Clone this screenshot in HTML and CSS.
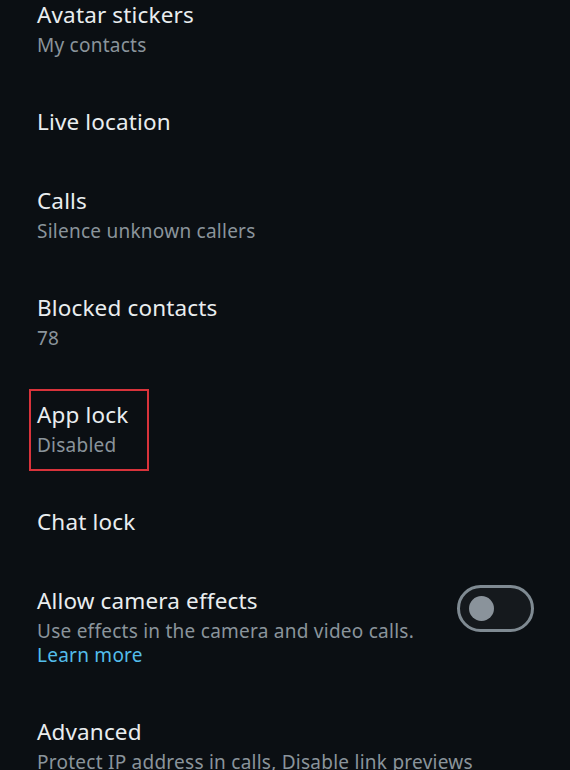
FILE: index.html
```html
<!DOCTYPE html>
<html lang="en">
<head>
    <meta charset="UTF-8">
    <title>Privacy</title>
    <link rel="stylesheet" href="styles.css">
</head>
<body>
<div id="settings">
    <div class="item">
        <div class="text">
            <div class="title">Avatar stickers</div>
            <div class="sub">My contacts</div>
        </div>
    </div>
    <div class="item">
        <div class="text">
            <div class="title">Live location</div>
        </div>
    </div>
    <div class="item">
        <div class="text">
            <div class="title">Calls</div>
            <div class="sub">Silence unknown callers</div>
        </div>
    </div>
    <div class="item">
        <div class="text">
            <div class="title">Blocked contacts</div>
            <div class="sub">78</div>
        </div>
    </div>
    <div class="item">
        <div class="text marked">
            <div class="title">App lock</div>
            <div class="sub">Disabled</div>
        </div>
    </div>
    <div class="item">
        <div class="text">
            <div class="title">Chat lock</div>
        </div>
    </div>
    <div class="item">
        <div class="text">
            <div class="title">Allow camera effects</div>
            <div class="sub">Use effects in the camera and video calls.<br><a href="javascript:;" class="link">Learn more</a></div>
        </div>
        <span class="switch"><span class="knob"></span></span>
    </div>
    <div class="item">
        <div class="text">
            <div class="title">Advanced</div>
            <div class="sub">Protect IP address in calls, Disable link previews</div>
        </div>
    </div>
</div>
</body>
</html>
```

FILE: styles.css
```css
* {
    margin: 0;
    padding: 0;
    text-decoration: none;
}
html, body {
    height: 100%;
    overflow: hidden;
}
body {
    background: #0b0f13;
    font-family: "Noto Sans", sans-serif;
}
#settings {
    margin-top: -24px;
}
.item {
    display: flex;
    padding: 25px 36px 26px 37px;
}
.text {
    flex: 1;
}
.title {
    font-size: 22.5px;
    line-height: 28px;
    letter-spacing: 0.15px;
    color: #e9edef;
}
.sub {
    margin-top: 4px;
    font-size: 19px;
    line-height: 24px;
    letter-spacing: 0.25px;
    color: #8a949b;
    white-space: nowrap;
}
.link {
    color: #53bdeb;
}
.marked {
    flex: none;
    margin: -12px 0 -14px -8px;
    padding: 10px 19px 12px 6px;
    border: 2px solid #d9333b;
}
.switch {
    position: relative;
    flex: none;
    width: 71px;
    height: 41px;
    margin-top: -2px;
    border: 3px solid #7f8a92;
    border-radius: 24px;
    background: #15191d;
}
.knob {
    position: absolute;
    left: 9px;
    top: 8px;
    width: 25px;
    height: 25px;
    border-radius: 50%;
    background: #8a939b;
}
```
